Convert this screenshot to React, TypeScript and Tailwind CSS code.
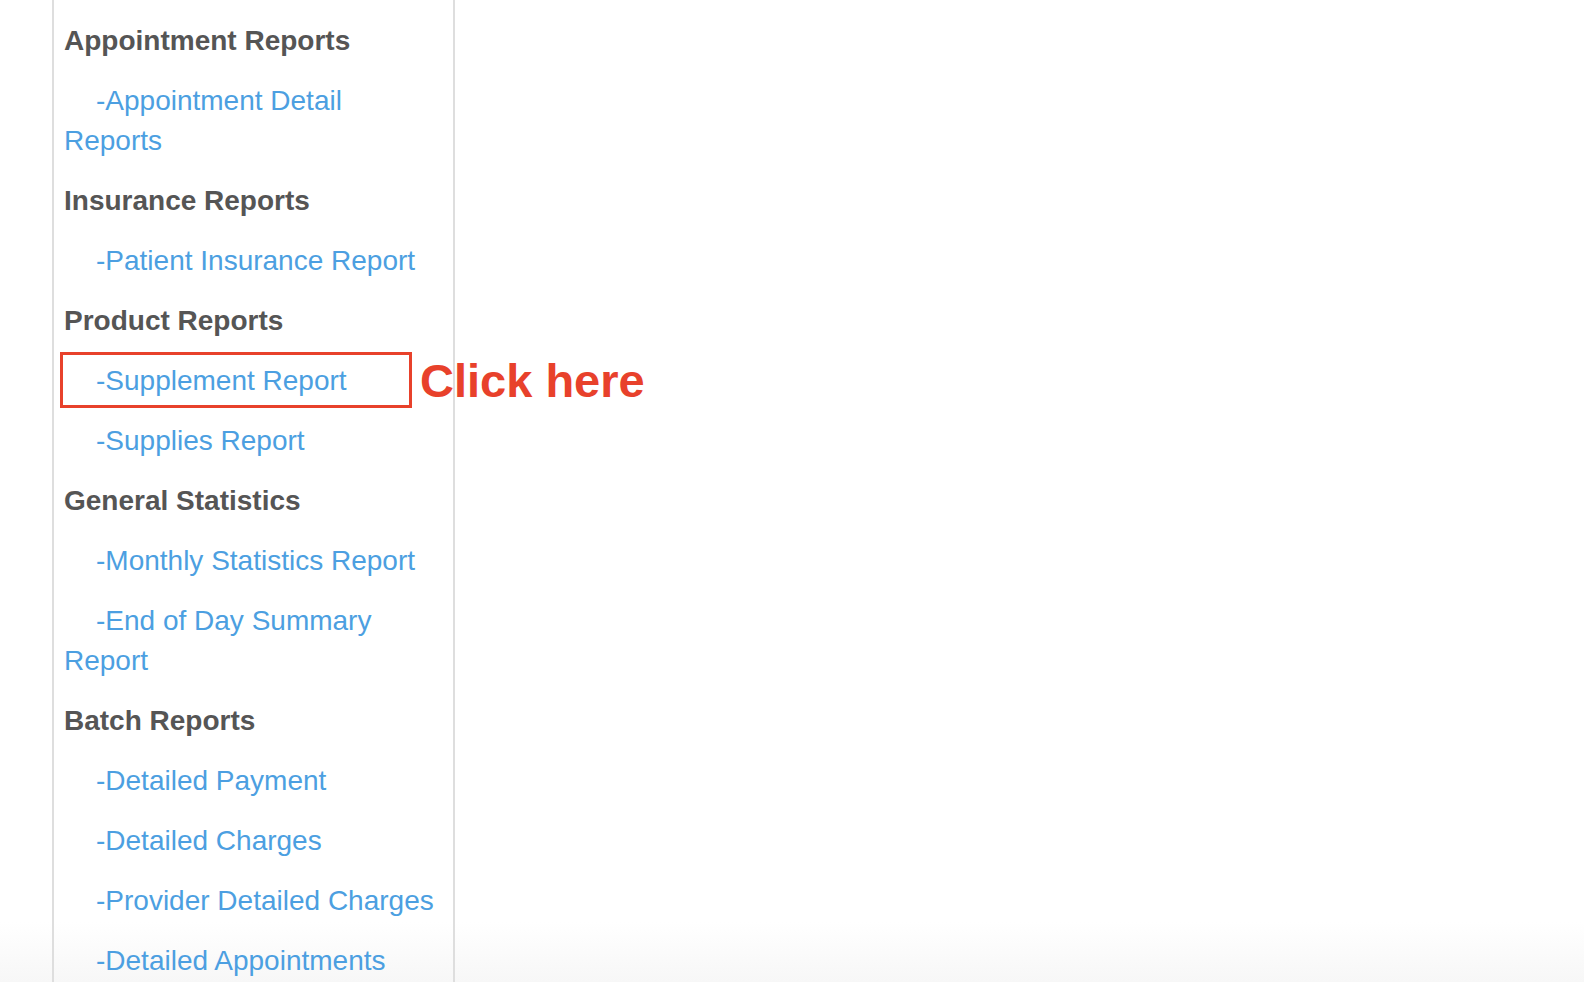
import React from 'react';

type Item = { label: string; heading?: boolean; highlight?: boolean };

const items: Item[] = [
  { label: 'Appointment Reports', heading: true },
  { label: '-Appointment Detail Reports' },
  { label: 'Insurance Reports', heading: true },
  { label: '-Patient Insurance Report' },
  { label: 'Product Reports', heading: true },
  { label: '-Supplement Report', highlight: true },
  { label: '-Supplies Report' },
  { label: 'General Statistics', heading: true },
  { label: '-Monthly Statistics Report' },
  { label: '-End of Day Summary Report' },
  { label: 'Batch Reports', heading: true },
  { label: '-Detailed Payment' },
  { label: '-Detailed Charges' },
  { label: '-Provider Detailed Charges' },
  { label: '-Detailed Appointments' },
];

const App: React.FC = () => {
  return (
    <div className="relative h-[982px] w-full overflow-hidden bg-white font-['Liberation_Sans',Arial,sans-serif]">
      {/* faint bottom shade, sits behind the content */}
      <div className="pointer-events-none absolute inset-x-0 bottom-0 h-[60px] bg-gradient-to-b from-transparent to-[#f7f7f7]" />
      <div className="relative flex h-full pl-[52px]">
        {/* Sidebar */}
        <div className="w-[403px] shrink-0 border-l-2 border-r-2 border-[#dedede] pl-[10px] pr-[10px] pt-[21px]">
          <ul className="flex flex-col gap-5 text-[28px] leading-[40px]">
            {items.map((item) =>
              item.heading ? (
                <li key={item.label} className="font-bold text-[#555555]">
                  {item.label}
                </li>
              ) : (
                <li key={item.label} className="relative">
                  <a className="block indent-8 text-[#4c9fe1] cursor-pointer">{item.label}</a>
                  {item.highlight && (
                    <>
                      <div className="pointer-events-none absolute left-[-4px] top-[-9px] h-[56px] w-[352px] border-[3px] border-[#e8412b]" />
                      <span className="pointer-events-none absolute left-[356px] top-[-4px] whitespace-nowrap text-[47px] font-bold leading-[47px] text-[#e8412b]">
                        Click here
                      </span>
                    </>
                  )}
                </li>
              )
            )}
          </ul>
        </div>
        <div className="flex-1" />
      </div>
    </div>
  );
};

export default App;
